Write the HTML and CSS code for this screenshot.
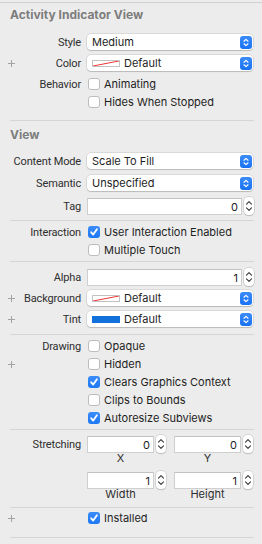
FILE: index.html
```html
<!DOCTYPE html>
<html lang="en">
<head>
    <meta charset="UTF-8">
    <title>Attributes Inspector</title>
    <link rel="stylesheet" href="styles.css">
</head>
<body>
    <div class="inspector">
        <div class="section-title first">Activity Indicator View</div>

        <div class="row popup-row r-style">
            <div class="label"><span class="text">Style</span></div>
            <div class="popup"><span class="value">Medium</span><span class="arrows"><svg viewBox="0 0 12 13" width="12" height="13"><path d="M4 5.2 6 3.4 8 5.2M4 7.8 6 9.6 8 7.8" fill="none" stroke="#fff" stroke-width="1.2" stroke-linecap="round" stroke-linejoin="round"/></svg></span></div>
        </div>
        <div class="row popup-row">
            <div class="label"><span class="plus"></span><span class="text">Color</span></div>
            <div class="popup"><span class="swatch empty"><svg viewBox="0 0 26 5" width="26" height="5" preserveAspectRatio="none"><path d="M0 5 26 0" stroke="#ee3434" stroke-width="1"/></svg></span><span class="value">Default</span><span class="arrows"><svg viewBox="0 0 12 13" width="12" height="13"><path d="M4 5.2 6 3.4 8 5.2M4 7.8 6 9.6 8 7.8" fill="none" stroke="#fff" stroke-width="1.2" stroke-linecap="round" stroke-linejoin="round"/></svg></span></div>
        </div>
        <div class="row check-row r-anim">
            <div class="label"><span class="text">Behavior</span></div>
            <div class="check"><span class="box"></span>Animating</div>
        </div>
        <div class="row check-row">
            <div class="label"></div>
            <div class="check"><span class="box"></span>Hides When Stopped</div>
        </div>

        <div class="divider d1"></div>

        <div class="section-title second">View</div>

        <div class="row popup-row r-content">
            <div class="label"><span class="text">Content Mode</span></div>
            <div class="popup"><span class="value">Scale To Fill</span><span class="arrows"><svg viewBox="0 0 12 13" width="12" height="13"><path d="M4 5.2 6 3.4 8 5.2M4 7.8 6 9.6 8 7.8" fill="none" stroke="#fff" stroke-width="1.2" stroke-linecap="round" stroke-linejoin="round"/></svg></span></div>
        </div>
        <div class="row popup-row r-semantic">
            <div class="label"><span class="text">Semantic</span></div>
            <div class="popup"><span class="value">Unspecified</span><span class="arrows"><svg viewBox="0 0 12 13" width="12" height="13"><path d="M4 5.2 6 3.4 8 5.2M4 7.8 6 9.6 8 7.8" fill="none" stroke="#fff" stroke-width="1.2" stroke-linecap="round" stroke-linejoin="round"/></svg></span></div>
        </div>
        <div class="row field-row r-tag">
            <div class="label"><span class="text">Tag</span></div>
            <div class="field wide">0</div>
            <div class="stepper"><svg viewBox="0 0 10 18" width="10" height="18"><path d="M2.5 7.2 5 4.6 7.5 7.2M2.5 10.8 5 13.4 7.5 10.8" fill="none" stroke="#3a3a3a" stroke-width="1.1" stroke-linecap="round" stroke-linejoin="round"/></svg></div>
        </div>

        <div class="divider d2"></div>

        <div class="row check-row r-inter">
            <div class="label"><span class="text">Interaction</span></div>
            <div class="check"><span class="box on"><svg viewBox="0 0 12 12" width="12" height="12"><path d="M3.2 6.3 5.2 8.6 8.9 3.2" fill="none" stroke="#fff" stroke-width="1.8" stroke-linecap="round" stroke-linejoin="round"/></svg></span>User Interaction Enabled</div>
        </div>
        <div class="row check-row">
            <div class="label"></div>
            <div class="check"><span class="box"></span>Multiple Touch</div>
        </div>

        <div class="divider d3"></div>

        <div class="row field-row r-alpha">
            <div class="label"><span class="text">Alpha</span></div>
            <div class="field wide">1</div>
            <div class="stepper"><svg viewBox="0 0 10 18" width="10" height="18"><path d="M2.5 7.2 5 4.6 7.5 7.2M2.5 10.8 5 13.4 7.5 10.8" fill="none" stroke="#3a3a3a" stroke-width="1.1" stroke-linecap="round" stroke-linejoin="round"/></svg></div>
        </div>
        <div class="row popup-row">
            <div class="label"><span class="plus"></span><span class="text">Background</span></div>
            <div class="popup"><span class="swatch empty"><svg viewBox="0 0 26 5" width="26" height="5" preserveAspectRatio="none"><path d="M0 5 26 0" stroke="#ee3434" stroke-width="1"/></svg></span><span class="value">Default</span><span class="arrows"><svg viewBox="0 0 12 13" width="12" height="13"><path d="M4 5.2 6 3.4 8 5.2M4 7.8 6 9.6 8 7.8" fill="none" stroke="#fff" stroke-width="1.2" stroke-linecap="round" stroke-linejoin="round"/></svg></span></div>
        </div>
        <div class="row popup-row">
            <div class="label"><span class="plus"></span><span class="text">Tint</span></div>
            <div class="popup"><span class="swatch blue"></span><span class="value">Default</span><span class="arrows"><svg viewBox="0 0 12 13" width="12" height="13"><path d="M4 5.2 6 3.4 8 5.2M4 7.8 6 9.6 8 7.8" fill="none" stroke="#fff" stroke-width="1.2" stroke-linecap="round" stroke-linejoin="round"/></svg></span></div>
        </div>

        <div class="divider d4"></div>

        <div class="row check-row r-draw">
            <div class="label"><span class="text">Drawing</span></div>
            <div class="check"><span class="box"></span>Opaque</div>
        </div>
        <div class="row check-row">
            <div class="label"><span class="plus"></span></div>
            <div class="check"><span class="box"></span>Hidden</div>
        </div>
        <div class="row check-row">
            <div class="label"></div>
            <div class="check"><span class="box on"><svg viewBox="0 0 12 12" width="12" height="12"><path d="M3.2 6.3 5.2 8.6 8.9 3.2" fill="none" stroke="#fff" stroke-width="1.8" stroke-linecap="round" stroke-linejoin="round"/></svg></span>Clears Graphics Context</div>
        </div>
        <div class="row check-row">
            <div class="label"></div>
            <div class="check"><span class="box"></span>Clips to Bounds</div>
        </div>
        <div class="row check-row">
            <div class="label"></div>
            <div class="check"><span class="box on"><svg viewBox="0 0 12 12" width="12" height="12"><path d="M3.2 6.3 5.2 8.6 8.9 3.2" fill="none" stroke="#fff" stroke-width="1.8" stroke-linecap="round" stroke-linejoin="round"/></svg></span>Autoresize Subviews</div>
        </div>

        <div class="divider d5"></div>

        <div class="row field-row r-stretch">
            <div class="label"><span class="text">Stretching</span></div>
            <div class="field small">0</div>
            <div class="stepper"><svg viewBox="0 0 10 18" width="10" height="18"><path d="M2.5 7.2 5 4.6 7.5 7.2M2.5 10.8 5 13.4 7.5 10.8" fill="none" stroke="#3a3a3a" stroke-width="1.1" stroke-linecap="round" stroke-linejoin="round"/></svg></div>
            <div class="field small second">0</div>
            <div class="stepper"><svg viewBox="0 0 10 18" width="10" height="18"><path d="M2.5 7.2 5 4.6 7.5 7.2M2.5 10.8 5 13.4 7.5 10.8" fill="none" stroke="#3a3a3a" stroke-width="1.1" stroke-linecap="round" stroke-linejoin="round"/></svg></div>
        </div>
        <div class="row caption-row">
            <div class="label"></div>
            <div class="caption">X</div>
            <div class="caption second">Y</div>
        </div>
        <div class="row field-row r-size">
            <div class="label"></div>
            <div class="field small">1</div>
            <div class="stepper"><svg viewBox="0 0 10 18" width="10" height="18"><path d="M2.5 7.2 5 4.6 7.5 7.2M2.5 10.8 5 13.4 7.5 10.8" fill="none" stroke="#3a3a3a" stroke-width="1.1" stroke-linecap="round" stroke-linejoin="round"/></svg></div>
            <div class="field small second">1</div>
            <div class="stepper"><svg viewBox="0 0 10 18" width="10" height="18"><path d="M2.5 7.2 5 4.6 7.5 7.2M2.5 10.8 5 13.4 7.5 10.8" fill="none" stroke="#3a3a3a" stroke-width="1.1" stroke-linecap="round" stroke-linejoin="round"/></svg></div>
        </div>
        <div class="row caption-row">
            <div class="label"></div>
            <div class="caption">Width</div>
            <div class="caption second">Height</div>
        </div>

        <div class="divider d6"></div>

        <div class="row check-row r-installed">
            <div class="label"><span class="plus"></span></div>
            <div class="check"><span class="box on"><svg viewBox="0 0 12 12" width="12" height="12"><path d="M3.2 6.3 5.2 8.6 8.9 3.2" fill="none" stroke="#fff" stroke-width="1.8" stroke-linecap="round" stroke-linejoin="round"/></svg></span>Installed</div>
        </div>

        <div class="divider d7"></div>
    </div>
</body>
</html>
```

FILE: styles.css
```css
:root {
    --panel: #ececec;
    --line: #d5d5d5;
    --title: #7d7d7d;
    --label: #2e2e2e;
    --value: #1e1e1e;
    --blue: #1c78f4;
}

* {
    margin: 0;
    padding: 0;
    box-sizing: border-box;
}

body {
    background: var(--panel);
    font-family: Inter, "Liberation Sans", sans-serif;
    font-size: 11px;
    color: var(--value);
    padding-top: 2px;
}

.inspector {
    border-top: 1px solid #d0d0d0;
    width: 262px;
}

.section-title {
    height: 22px;
    line-height: 22px;
    padding-left: 10px;
    font-size: 12px;
    font-weight: 700;
    color: var(--title);
}

.section-title.first { margin-top: 1px; }
.section-title.second { margin-top: 3px; }

.row {
    display: flex;
    align-items: center;
}

.label {
    width: 81px;
    flex-shrink: 0;
    display: flex;
    align-items: center;
    padding-left: 8px;
    margin-right: 6px;
    font-family: Roboto, "Liberation Sans", sans-serif;
    letter-spacing: -0.15px;
    color: var(--label);
}

.label .text {
    margin-left: auto;
    white-space: nowrap;
}

.plus {
    width: 7px;
    height: 7px;
    position: relative;
    flex-shrink: 0;
}

.plus::before,
.plus::after {
    content: "";
    position: absolute;
    background: #a3a3a3;
}

.plus::before { left: 0; top: 3px; width: 7px; height: 1px; }
.plus::after { left: 3px; top: 0; width: 1px; height: 7px; }

/* popup buttons */
.popup-row {
    height: 20px;
    margin-top: 1px;
}

.r-style { margin-top: 6px; }
.r-content { margin-top: 5px; }
.r-semantic { margin-top: 2px; }

.popup {
    width: 166px;
    height: 16px;
    background: #fff;
    border-radius: 4px;
    box-shadow: 0 0 0 0.5px rgba(0, 0, 0, 0.16), 0 1px 1px rgba(0, 0, 0, 0.14);
    display: flex;
    align-items: center;
    padding-left: 5px;
    padding-right: 1px;
}

.popup .value {
    flex: 1;
    white-space: nowrap;
}

.arrows {
    width: 12px;
    height: 13px;
    border-radius: 3px;
    background: linear-gradient(#3b8cf8, #1872f2);
    display: flex;
}

.swatch {
    width: 28px;
    height: 7px;
    margin-right: 4px;
    flex-shrink: 0;
    display: flex;
}

.swatch.empty {
    background: #fff;
    border: 1px solid #c2c2c2;
}

.swatch.blue {
    background: #1170d9;
}

/* checkboxes */
.check-row {
    height: 18px;
}

.r-anim { margin-top: 2px; }
.r-inter { margin-top: 2px; }
.r-draw { margin-top: 2px; }
.r-installed { margin-top: 1px; }

.check {
    display: flex;
    align-items: center;
    white-space: nowrap;
}

.box {
    width: 12px;
    height: 12px;
    margin-left: 1px;
    margin-right: 4px;
    background: #fff;
    border: 1px solid #bcbcbc;
    border-radius: 3px;
    display: flex;
}

.box.on {
    border: none;
    background: linear-gradient(#3b8cf8, var(--blue));
}

/* text fields */
.field-row {
    height: 20px;
}

.r-tag { margin-top: 3px; }
.r-alpha { margin-top: 5px; }
.r-stretch { margin-top: 5px; height: 18px; }
.r-size { margin-top: 7px; height: 18px; }

.field {
    height: 17px;
    line-height: 16px;
    background: #fff;
    border: 1px solid #cfcfcf;
    border-top-color: #c2c2c2;
    text-align: right;
    padding-right: 3px;
}

.field.wide { width: 155px; }
.field.small { width: 67px; }
.field.small.second { margin-left: 8px; }

.stepper {
    width: 10px;
    height: 18px;
    margin-left: 2px;
    background: #fff;
    border-radius: 4px;
    box-shadow: 0 0 0 0.5px rgba(0, 0, 0, 0.2), 0 1px 1px rgba(0, 0, 0, 0.12);
    display: flex;
}

.caption-row {
    height: 11px;
    line-height: 11px;
    color: var(--label);
}

.caption {
    width: 67px;
    text-align: center;
}

.caption.second {
    margin-left: 20px;
}

/* separators */
.divider {
    height: 1px;
    background: var(--line);
    margin-left: 10px;
    width: 244px;
}

.d1 { margin-top: 9px; }
.d2 { margin-top: 4px; }
.d3 { margin-top: 2px; }
.d4 { margin-top: 5px; }
.d5 { margin-top: 2px; }
.d6 { margin-top: 7px; }
.d7 { margin-top: 10px; }
```
